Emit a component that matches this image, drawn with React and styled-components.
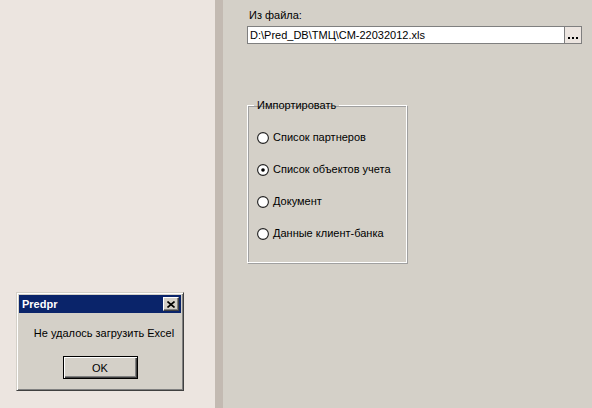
import styled, { createGlobalStyle } from "styled-components";

const GlobalStyle = createGlobalStyle`
  body {
    margin: 0;
    font-family: "Liberation Sans", Arial, sans-serif;
    font-size: 11px;
    color: #000;
  }
`;

const Page = styled.div`
  position: relative;
  display: flex;
  width: 592px;
  height: 408px;
  overflow: hidden;
`;

const LeftPanel = styled.div`
  width: 215px;
  background: #ece5e0;
`;

const Splitter = styled.div`
  width: 8px;
  background: #c3bab2;
`;

const Main = styled.div`
  flex: 1;
  display: flex;
  flex-direction: column;
  align-items: flex-start;
  background: #d4d0c8;
  padding: 9px 0 0 24px;
`;

const FieldLabel = styled.div`
  line-height: 13px;
  padding-left: 2px;
  margin-bottom: 4px;
`;

const FileRow = styled.div`
  display: flex;
  width: 335px;
  height: 18px;
`;

const FileInput = styled.div`
  flex: 1;
  background: #fff;
  border: 1px solid #7f7f7f;
  padding: 0 2px;
  line-height: 16px;
  white-space: nowrap;
`;

const BrowseButton = styled.div`
  width: 17px;
  background: #ece5e0;
  border: 1px solid #7f7f7f;
  border-left: none;
  display: flex;
  align-items: flex-end;
  justify-content: center;
  padding-bottom: 4px;
  box-sizing: border-box;
`;

const GroupBox = styled.fieldset`
  margin: 55px 0 0;
  padding: 19px 0 0 9px;
  width: 160px;
  height: 164px;
  box-sizing: border-box;
  border: 1px solid #fff;
  box-shadow: inset 1px 1px 0 #a0a0a0, 1px 1px 0 #a0a0a0;
  min-inline-size: 0;
`;

const Legend = styled.legend`
  padding: 0 3px;
  margin-left: -3px;
  line-height: 13px;
`;

const RadioList = styled.div`
  display: flex;
  flex-direction: column;
  gap: 19px;
`;

const RadioRow = styled.label`
  display: flex;
  align-items: center;
  gap: 4px;
  height: 13px;
  line-height: 13px;
`;

const RadioMark = styled.svg`
  flex: none;
  display: block;
`;

const Dialog = styled.div`
  position: absolute;
  left: 16px;
  top: 292px;
  width: 168px;
  height: 99px;
  box-sizing: border-box;
  background: #d4d0c8;
  border: 1px solid;
  border-color: #d4d0c8 #404040 #404040 #d4d0c8;
  box-shadow: inset 1px 1px 0 #fff, inset -1px -1px 0 #808080;
  padding: 2px;
  display: flex;
  flex-direction: column;
  align-items: center;
`;

const TitleBar = styled.div`
  align-self: stretch;
  height: 18px;
  background: #0a246a;
  display: flex;
  align-items: center;
  justify-content: space-between;
  padding: 0 2px 0 3px;
`;

const Title = styled.span`
  color: #fff;
  font-weight: bold;
  font-size: 11px;
`;

const CloseButton = styled.div`
  width: 16px;
  height: 14px;
  box-sizing: border-box;
  background: #d4d0c8;
  border: 1px solid;
  border-color: #fff #404040 #404040 #fff;
  box-shadow: inset -1px -1px 0 #808080;
  display: flex;
  align-items: center;
  justify-content: center;
`;

const Message = styled.div`
  margin-top: 14px;
  padding-left: 8px;
  line-height: 13px;
  white-space: nowrap;
`;

const OkButton = styled.div`
  margin-top: 16px;
  width: 75px;
  height: 23px;
  box-sizing: border-box;
  border: 1px solid #000;
  box-shadow: inset 1px 1px 0 #fff, inset -1px -1px 0 #404040,
    inset -2px -2px 0 #808080;
  display: flex;
  align-items: center;
  justify-content: center;
`;

const options = [
  { label: "Список партнеров" },
  { label: "Список объектов учета", checked: true },
  { label: "Документ" },
  { label: "Данные клиент-банка" },
];

function Radio({ checked }) {
  return (
    <RadioMark width="12" height="12" viewBox="0 0 12 12">
      <circle cx="6" cy="6" r="5.4" fill="#fff" stroke="#202020" strokeWidth="1.1" />
      {checked && <circle cx="6" cy="6" r="1.8" fill="#000" />}
    </RadioMark>
  );
}

export default function App() {
  return (
    <>
      <GlobalStyle />
      <Page>
        <LeftPanel />
        <Splitter />
        <Main>
          <FieldLabel>Из файла:</FieldLabel>
          <FileRow>
            <FileInput>D:\Pred_DB\ТМЦ\СМ-22032012.xls</FileInput>
            <BrowseButton>
              <svg width="10" height="2" viewBox="0 0 10 2">
                <rect x="0" y="0" width="2" height="2" fill="#000" />
                <rect x="4" y="0" width="2" height="2" fill="#000" />
                <rect x="8" y="0" width="2" height="2" fill="#000" />
              </svg>
            </BrowseButton>
          </FileRow>
          <GroupBox>
            <Legend>Импортировать</Legend>
            <RadioList>
              {options.map((o) => (
                <RadioRow key={o.label}>
                  <Radio checked={o.checked} />
                  {o.label}
                </RadioRow>
              ))}
            </RadioList>
          </GroupBox>
        </Main>
        <Dialog>
          <TitleBar>
            <Title>Predpr</Title>
            <CloseButton>
              <svg width="8" height="7" viewBox="0 0 8 7">
                <path d="M0.5 0.5 L7.5 6.5 M7.5 0.5 L0.5 6.5" stroke="#000" strokeWidth="1.6" />
              </svg>
            </CloseButton>
          </TitleBar>
          <Message>Не удалось загрузить Excel</Message>
          <OkButton>OK</OkButton>
        </Dialog>
      </Page>
    </>
  );
}
